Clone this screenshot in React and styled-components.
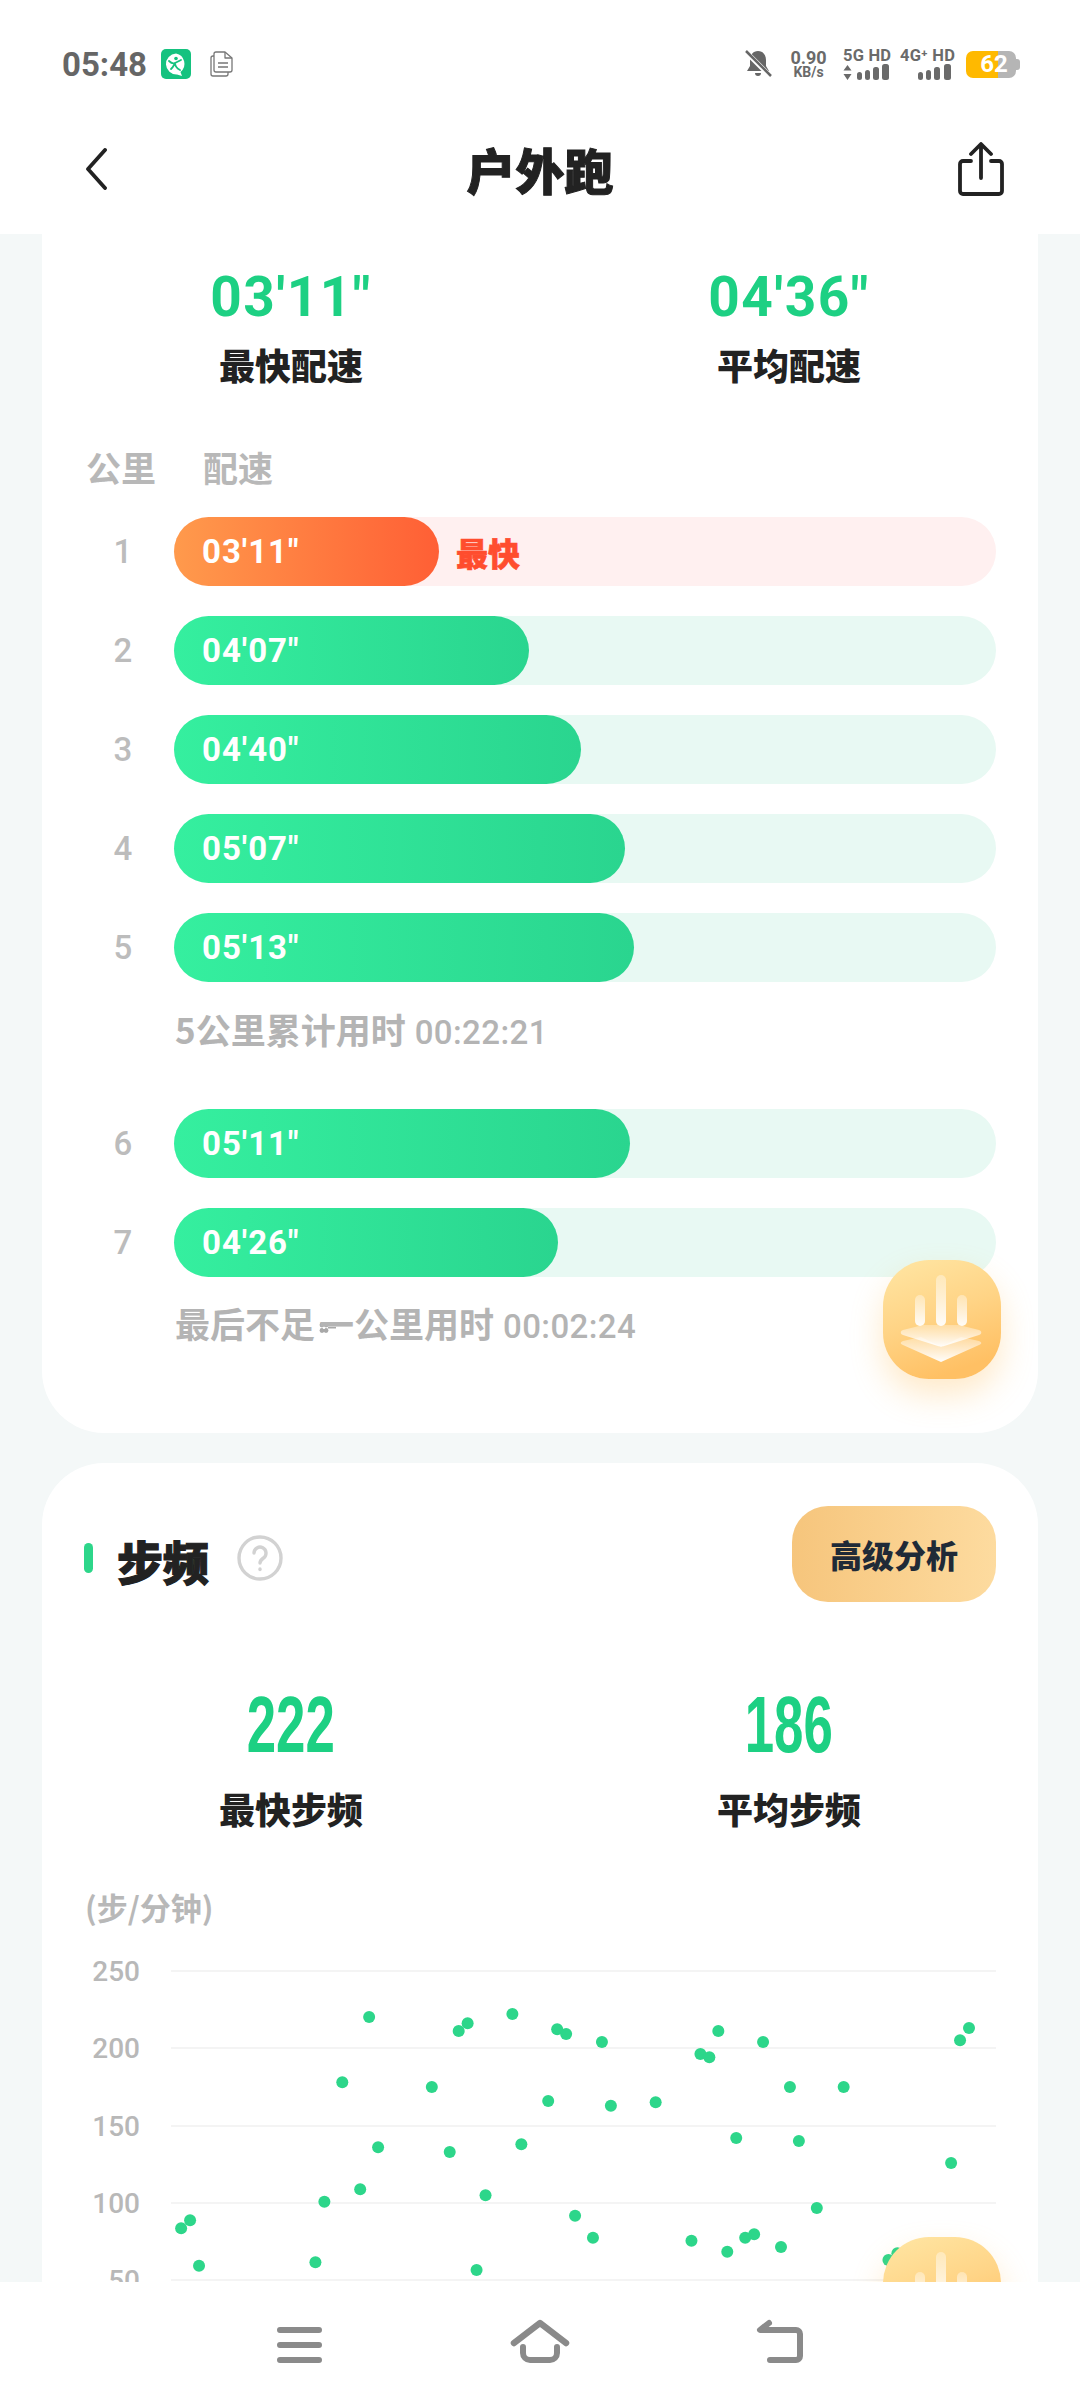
import React from 'react';
import styled, { createGlobalStyle } from 'styled-components';

const cjk = '"Noto Sans CJK SC", "Noto Sans", sans-serif';
const num = 'Roboto, "Noto Sans", sans-serif';

const Global = createGlobalStyle`
  html, body { margin: 0; padding: 0; background: #fff; }
  * { box-sizing: border-box; }
`;
const Page = styled.div`
  width: 1080px; height: 2408px; overflow: hidden; display: flex; flex-direction: column;
  background: #f4f8f8; font-family: ${cjk};
`;
const Top = styled.header`background: #fff; height: 234px; flex: none;`;
const StatusBar = styled.div`
  height: 128px; display: flex; align-items: center; justify-content: space-between; padding: 0 60px 0 62px;
`;
const StatusGroup = styled.div`display: flex; align-items: center;`;
const Time = styled.span`
  font: 700 33px ${num}; color: #666; margin-right: 15px; width: 84px; white-space: nowrap;
`;
const Speed = styled.div`
  width: 37px; display: flex; flex-direction: column; align-items: center; margin: 0 16px 0 18px; color: #6a6a6a; font-family: ${num}; font-weight: 700;
  b { font-size: 18px; line-height: 17px; font-weight: 700; }
  span { font-size: 14px; line-height: 13px; }
`;
const Net = styled.div`
  width: ${p => p.$w}px; display: flex; flex-direction: column; align-items: stretch; margin-right: 10px; color: #6a6a6a;
  span { font: 700 16.5px/17px ${num}; white-space: nowrap; letter-spacing: .2px; }
  svg { display: block; }
`;
const Battery = styled.div`
  position: relative; width: 50px; height: 27px; border-radius: 7px; margin-right: 4px;
  background: linear-gradient(90deg, #ffb900 0 64%, #b5b5b5 64%);
  color: #fff; font: 700 24px/27px ${num}; text-align: center; padding-left: 6px;
  &::after {
    content: ''; position: absolute; right: -4px; top: 8px; width: 4px; height: 11px; background: #b5b5b5; border-radius: 0 3px 3px 0;
  }
`;
const TitleBar = styled.div`
  height: 106px; display: grid; grid-template-columns: 1fr auto 1fr; align-items: center; padding: 0 76px 24px;
`;
const TitleEnd = styled.div`
  display: flex; justify-content: ${p => (p.$right ? 'flex-end' : 'flex-start')};
  padding-left: ${p => (p.$right ? 0 : 9)}px;
  svg { display: block; }
`;
const Title = styled.h1`
  margin: 0; font: 900 49px/60px ${cjk}; color: #222; -webkit-text-stroke: 1px #222;
`;
const Content = styled.main`
  flex: 1; min-height: 0; overflow: hidden; padding: 0 42px; display: flex; flex-direction: column; gap: 30px;
`;
const Card = styled.section`
  position: relative; flex: none; background: #fff; width: 996px;
  border-radius: ${p => (p.$cut ? '0 0 62px 62px' : '62px')};
  padding-bottom: ${p => p.$pb || 0}px;
`;
const Stats = styled.div`
  display: grid; grid-template-columns: 1fr 1fr; padding-top: ${p => p.$pt}px;
`;
const Stat = styled.div`display: flex; flex-direction: column; align-items: center;`;
const Value = styled.div`
  font: 700 55px/56px ${num}; color: #1dd083; letter-spacing: 1.5px; white-space: nowrap;
`;
const NarrowValue = styled.div`
  font: 700 80px/80px "Liberation Sans", sans-serif; color: #1dd083; transform: scaleX(.66); white-space: nowrap;
`;
const StatLabel = styled.div`
  font: 900 36px/44px ${cjk}; color: #222; margin-top: ${p => p.$mt}px;
`;
const ListHead = styled.div`
  display: flex; gap: 47px; padding: 0 0 0 44px; margin-top: 60px; margin-bottom: 29px;
  font: 700 35px/42px ${cjk}; color: #b8b8b8;
`;
const Rows = styled.div`display: flex; flex-direction: column; gap: 30px; padding: 0 42px;`;
const Row = styled.div`display: flex; align-items: center; gap: 12px;`;
const Km = styled.span`
  width: 78px; text-align: center; font: 500 33px/40px ${num}; color: #bcbcbc;
`;
const Track = styled.div`
  flex: 1; height: 69px; border-radius: 35px; display: flex; align-items: center; background: ${p => (p.$best ? '#fff0f0' : '#e8f9f3')};
`;
const Fill = styled.div`
  height: 69px; border-radius: 35px; padding-left: 28px; display: flex; align-items: center; flex: none;
  color: #fff; font: 700 33px/1 ${num}; letter-spacing: 1px;
  background: ${p => (p.$best ? 'linear-gradient(90deg,#ff9a4c,#ff5f35)' : 'linear-gradient(90deg,#35ef9f,#2ad58f)')};
`;
const Best = styled.span`
  margin-left: 17px; font: 900 32px/1 ${cjk}; color: #ff4d2e; -webkit-text-stroke: .6px #ff4d2e;
`;
const Note = styled.div`
  height: 44px; padding-left: 133px; margin: ${p => p.$mt}px 0 ${p => p.$mb}px; font: 700 35px/38px ${cjk}; color: #b4b4b4; white-space: nowrap;
  span { font: 500 33px/38px ${num}; margin-left: 9px; letter-spacing: .4px; }
  svg { width: 17px; height: 12px; margin-right: -17px; margin-left: 4px; vertical-align: 4px; }
`;
const Fab = styled.div`
  position: absolute; right: 37px; width: 118px; height: 119px; border-radius: 46px;
  ${p => (p.$top != null ? `top: ${p.$top}px;` : `bottom: ${p.$bottom}px;`)}
  background: linear-gradient(160deg, #ffe6a4 0%, #ffd486 45%, #ffc064 85%);
  box-shadow: 0 16px 32px rgba(255,190,90,.32);
  svg { display: block; }
`;
const SectionHead = styled.div`
  display: flex; align-items: center; justify-content: space-between; padding: 43px 42px 0;
`;
const SectionTitle = styled.div`display: flex; align-items: center; margin-top: 8px;`;
const Pill = styled.i`
  width: 9px; height: 30px; border-radius: 5px; background: #2dd68a; margin-right: 24px;
`;
const SectionName = styled.h2`
  margin: 4px 28px 0 0; font: 900 46px/50px ${cjk}; color: #222; -webkit-text-stroke: 1.2px #222;
`;
const AdvButton = styled.div`
  width: 204px; height: 96px; border-radius: 36px; display: flex; align-items: center; justify-content: center;
  background: linear-gradient(90deg, #f6c57c, #fddb9f); color: #1f2a37; font: 900 32px/1 ${cjk};
`;
const Unit = styled.div`
  padding-left: 43px; margin-top: 56px; font: 700 31px/42px ${cjk}; color: #b8b8b8;
`;
const Chart = styled.svg`
  display: block; width: 996px; height: 360px; margin-top: 12px;
  text { font: 500 28px ${num}; fill: #b8b8b8; }
`;
const BottomNav = styled.nav`
  height: 126px; flex: none; background: #fff; position: relative; z-index: 2;
`;
const NavIcons = styled.svg`display: block;`;

const rows = [
  { km: 1, t: `03'11"`, w: 265, best: true },
  { km: 2, t: `04'07"`, w: 355 },
  { km: 3, t: `04'40"`, w: 407 },
  { km: 4, t: `05'07"`, w: 451 },
  { km: 5, t: `05'13"`, w: 460 },
];
const rows2 = [
  { km: 6, t: `05'11"`, w: 456 },
  { km: 7, t: `04'26"`, w: 384 },
];

const zoomDots = [[263,985],[276,961],[289,1097],[458,1087],[471,905],[497,547],[523,868],[536,351],[549,742],[627,561],[653,756],[666,393],[679,370],[692,1110],[705,886],[744,342],[757,733],[796,603],[809,388],[822,402],[835,947],[861,1013],[874,426],[887,617],[952,607],[1004,1022],[1017,462],[1030,472],[1043,393],[1056,1055],[1069,714],[1082,1013],[1095,1003],[1108,426],[1134,1041],[1147,561],[1160,723],[1186,924],[1225,561],[1290,1080],[1303,1060],[1381,789],[1394,421],[1407,384]];
const dots = zoomDots.map(([x, y]) => [x / 1.452, 1900 + y / 3]);
const grid = [[250, 1971], [200, 2048], [150, 2126], [100, 2203], [50, 2280]];

const BarRow = ({ km, t, w, best }) => (
  <Row>
    <Km>{km}</Km>
    <Track $best={best}>
      <Fill $best={best} style={{ width: w }}>{t}</Fill>
      {best && <Best>最快</Best>}
    </Track>
  </Row>
);

const FabIcon = () => (
  <svg width="118" height="119" viewBox="0 0 118 119">
    <defs>
      <linearGradient id="fb" x1="0" y1="0" x2="0" y2="1">
        <stop offset="0" stopColor="#fff" stopOpacity=".35" />
        <stop offset="1" stopColor="#fff" stopOpacity=".95" />
      </linearGradient>
      <linearGradient id="fd" x1="0" y1="0" x2="0" y2="1">
        <stop offset="0" stopColor="#fff" stopOpacity=".3" />
        <stop offset="1" stopColor="#fff" stopOpacity=".98" />
      </linearGradient>
    </defs>
    <rect x="32" y="35" width="10" height="31" rx="5" fill="url(#fb)" />
    <rect x="53" y="15" width="10" height="51" rx="5" fill="url(#fb)" />
    <rect x="74" y="35" width="10" height="31" rx="5" fill="url(#fb)" />
    <path d="M20 85c-3-1-3-3 0-4l18-4 20 10 20-10 18 4c3 1 3 3 0 4l-38 17z" fill="url(#fd)" />
    <path d="M20 70l20-5h36l20 5c3 1 3 4 0 5L58 87 20 75c-3-1-3-4 0-5z" fill="url(#fd)" />
  </svg>
);

export default function App() {
  return (
    <Page>
      <Global />
      <Top>
        <StatusBar>
          <StatusGroup>
            <Time>05:48</Time>
            <svg width="30" height="30" viewBox="0 0 30 30" style={{ marginRight: 19 }}>
              <rect width="30" height="30" rx="5" fill="#15c27f" />
              <path d="M15 4.500a10.500 10.500 0 1 0 1 21l5 1.500-1.500-4A10.500 10.500 0 0 0 15 4.500z" fill="#fff" />
              <circle cx="15" cy="9.500" r="1.800" fill="#15c27f" />
              <path d="M8 12c2 2 4 3 6 2l6-3M14 14c0 3 1 5 5 7M13 16c-1 2-2 3-3 4" fill="none" stroke="#15c27f" strokeWidth="1.800" strokeLinecap="round" />
            </svg>
            <svg width="23" height="26" viewBox="0 0 23 26" fill="none" stroke="#777" strokeWidth="1.300" strokeLinejoin="round">
              <path d="M6 1h9l7 6v12a2 2 0 0 1-2 2H6a2 2 0 0 1-2-2V3a2 2 0 0 1 2-2z" />
              <path d="M15 1v6h7M8 12h10M8 16h10" />
              <path d="M4 5H3a2 2 0 0 0-2 2v16a2 2 0 0 0 2 2h13a2 2 0 0 0 2-2v-2" />
            </svg>
          </StatusGroup>
          <StatusGroup>
            <svg width="28" height="28" viewBox="0 0 28 28">
              <path d="M14 1c5 0 8 4 8 9v6l3 5H3l3-5v-6c0-5 3-9 8-9zM11 23h6a3 3 0 0 1-6 0z" fill="#666" />
              <path d="M2 2l24 24" stroke="#fff" strokeWidth="5" />
              <path d="M2 1l25 25" stroke="#666" strokeWidth="2.500" />
            </svg>
            <Speed><b>0.90</b><span>KB/s</span></Speed>
            <Net $w={47}>
              <span>5G HD</span>
              <svg width="47" height="17" viewBox="0 0 47 17" fill="#6a6a6a">
                <path d="M4.500 1l4 5.500H.5zM4.500 16l4-6H.5z" />
                <rect x="14" y="8" width="5" height="8" rx="2.500" />
                <rect x="22" y="6" width="5" height="10" rx="2.500" />
                <rect x="30" y="3" width="6" height="13" rx="2.500" />
                <rect x="39" y="0" width="7" height="16" rx="2.500" />
              </svg>
            </Net>
            <Net $w={56}>
              <span>4G⁺ HD</span>
              <svg width="56" height="17" viewBox="0 0 56 17" fill="#6a6a6a">
                <rect x="18" y="8" width="5" height="8" rx="2.500" />
                <rect x="26" y="6" width="5" height="10" rx="2.500" />
                <rect x="34" y="3" width="6" height="13" rx="2.500" />
                <rect x="44" y="0" width="7" height="16" rx="2.500" />
              </svg>
            </Net>
            <Battery>62</Battery>
          </StatusGroup>
        </StatusBar>
        <TitleBar>
          <TitleEnd>
            <svg width="22" height="42" viewBox="0 0 22 42" fill="none" stroke="#222" strokeWidth="3.800" strokeLinecap="round" strokeLinejoin="round">
              <path d="M20 2L3 21l17 19" />
            </svg>
          </TitleEnd>
          <Title>户外跑</Title>
          <TitleEnd $right>
            <svg width="46" height="54" viewBox="0 0 46 54" fill="none" stroke="#222" strokeWidth="3.800" strokeLinecap="round" strokeLinejoin="round">
              <path d="M13 19H5a3 3 0 0 0-3 3v27a3 3 0 0 0 3 3h36a3 3 0 0 0 3-3V22a3 3 0 0 0-3-3h-8" />
              <path d="M23 36V3M13 12l10-10 10 10" />
            </svg>
          </TitleEnd>
        </TitleBar>
      </Top>
      <Content>
        <Card $cut $pb={85}>
          <Stats $pt={35}>
            <Stat><Value>03'11"</Value><StatLabel $mt={17}>最快配速</StatLabel></Stat>
            <Stat><Value>04'36"</Value><StatLabel $mt={17}>平均配速</StatLabel></Stat>
          </Stats>
          <ListHead><span>公里</span><span>配速</span></ListHead>
          <Rows>{rows.map(r => <BarRow key={r.km} {...r} />)}</Rows>
          <Note $mt={28} $mb={55}>5公里累计用时<span>00:22:21</span></Note>
          <Rows>{rows2.map(r => <BarRow key={r.km} {...r} />)}</Rows>
          <Note $mt={27} $mb={0}>
            最后不足
            <svg viewBox="0 0 17 12">
              <g fill="#a8a8a8"><circle cx="3" cy="3" r="2.400" /><circle cx="7" cy="3" r="2.400" /><circle cx="3" cy="8.500" r="2.400" /><circle cx="7" cy="8.500" r="2.400" /></g>
              <circle cx="5" cy="5.700" r="1.200" fill="#fff" />
              <path d="M9 5.700h8" stroke="#a8a8a8" strokeWidth="1.600" />
            </svg>
            一公里用时<span>00:02:24</span>
          </Note>
          <Fab $bottom={54}><FabIcon /></Fab>
        </Card>
        <Card $pb={100}>
          <SectionHead>
            <SectionTitle>
              <Pill />
              <SectionName>步频</SectionName>
              <svg width="46" height="46" viewBox="0 0 46 46" fill="none" stroke="#d2d2d2" strokeWidth="3.400" strokeLinecap="round">
                <circle cx="23" cy="23" r="21" />
                <path d="M17 18a6 6 0 1 1 9.500 5c-2 1.400-3.500 2.500-3.500 5" />
                <path d="M23 34v.5" />
              </svg>
            </SectionTitle>
            <AdvButton>高级分析</AdvButton>
          </SectionHead>
          <Stats $pt={83}>
            <Stat><NarrowValue>222</NarrowValue><StatLabel $mt={21}>最快步频</StatLabel></Stat>
            <Stat><NarrowValue>186</NarrowValue><StatLabel $mt={21}>平均步频</StatLabel></Stat>
          </Stats>
          <Unit>(步/分钟)</Unit>
          <Chart viewBox="42 1940 996 360">
            {grid.map(([v, y]) => (
              <g key={v}>
                <line x1="171" x2="996" y1={y} y2={y} stroke="#f4f4f4" strokeWidth="2" />
                <text x="140" y={y + 10} textAnchor="end">{v}</text>
              </g>
            ))}
            {dots.map(([x, y], i) => <circle key={i} cx={x} cy={y} r="6" fill="#2dd68a" />)}
          </Chart>
          <Fab $top={774}><FabIcon /></Fab>
        </Card>
      </Content>
      <BottomNav>
        <NavIcons width="1080" height="126" viewBox="0 2282 1080 126" fill="none" stroke="#8a8a8a" strokeWidth="6" strokeLinecap="round" strokeLinejoin="round">
          <path d="M280 2330h39M280 2345h39M280 2360h39" />
          <path d="M514 2343l26-20 26 20" strokeWidth="6.500" />
          <path d="M523 2347v6a7 7 0 0 0 7 7h20a7 7 0 0 0 7-7v-6" />
          <path d="M769 2323l-9 7h36a4 4 0 0 1 4 4v22a4 4 0 0 1-4 4h-26" />
        </NavIcons>
      </BottomNav>
    </Page>
  );
}
